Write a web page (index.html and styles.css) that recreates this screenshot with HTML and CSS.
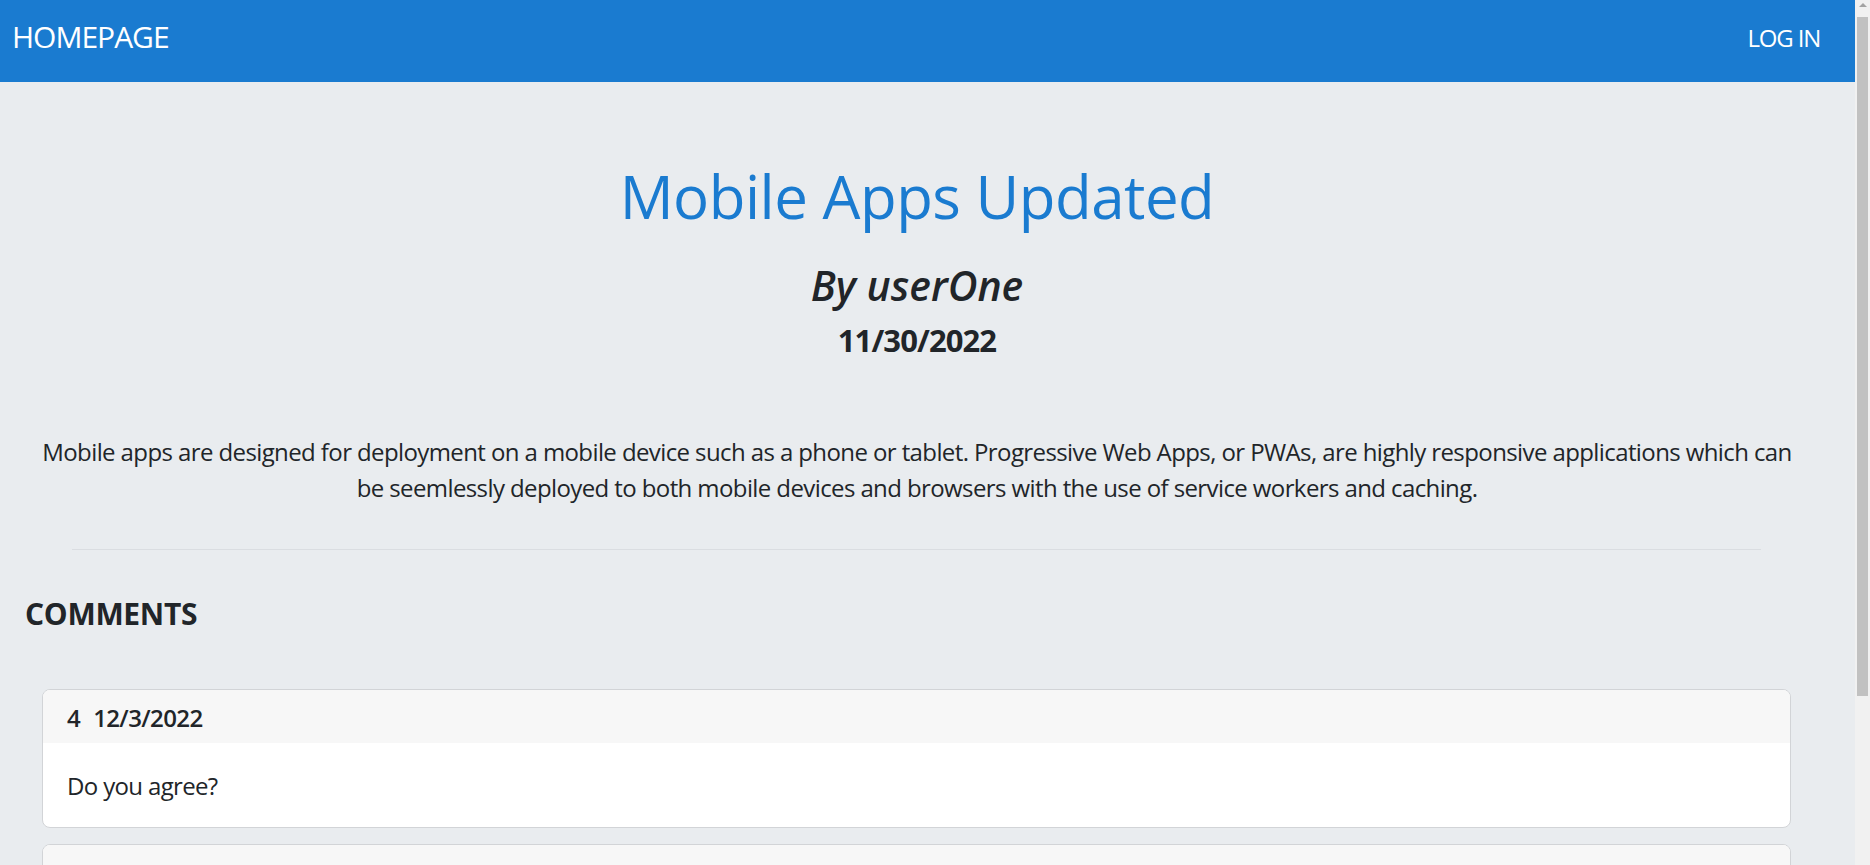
FILE: index.html
```html
<!DOCTYPE html>
<html lang="en">
<head>
<meta charset="utf-8">
<title>Mobile Apps Updated</title>
<link rel="stylesheet" href="styles.css">
</head>
<body>
<div class="frame">
  <div class="page">
    <header class="navbar">
      <a class="brand">HOMEPAGE</a>
      <a class="login">LOG IN</a>
    </header>
    <main class="content">
      <section class="post">
        <h1 class="post-title">Mobile Apps Updated</h1>
        <h2 class="post-author">By userOne</h2>
        <h3 class="post-date">11/30/2022</h3>
      </section>
      <p class="post-body">Mobile apps are designed for deployment on a mobile device such as a phone or tablet. Progressive Web Apps, or PWAs, are highly responsive applications which can be seemlessly deployed to both mobile devices and browsers with the use of service workers and caching.</p>
      <hr class="divider">
      <h2 class="comments-title">COMMENTS</h2>
      <div class="comments">
        <div class="card">
          <div class="card-header"><span class="c-user">4</span><span>12/3/2022</span></div>
          <div class="card-body">Do you agree?</div>
        </div>
        <div class="card">
          <div class="card-header"><span class="c-user">1</span><span>12/3/2022</span></div>
          <div class="card-body">Great post!</div>
        </div>
      </div>
    </main>
  </div>
  <div class="scrollbar">
    <div class="sb-arrow"></div>
    <div class="sb-thumb"></div>
  </div>
</div>
</body>
</html>
```
FILE: styles.css
```css
* { box-sizing: border-box; }
html, body {
  margin: 0;
  padding: 0;
  height: 100%;
  overflow: hidden;
}
body {
  font-family: "Segoe UI", "Open Sans", "Noto Sans", sans-serif;
  color: #212529;
  background: #e9ecef;
}
.frame {
  display: flex;
  height: 865px;
}
.page {
  flex: 1;
  min-width: 0;
  overflow: hidden;
  background: #e9ecef;
}
.navbar {
  height: 82px;
  background: #1a7bd0;
  display: flex;
  align-items: flex-start;
  justify-content: space-between;
  padding: 17px 35px 0 12px;
  color: #fff;
}
.brand {
  font-size: 30px;
  line-height: 40px;
  font-weight: 400;
  letter-spacing: -1px;
}
.login {
  font-size: 24px;
  line-height: 40px;
  letter-spacing: -1.2px;
  margin-top: 1px;
}
.content {
  display: flex;
  flex-direction: column;
}
.post {
  display: flex;
  flex-direction: column;
  align-items: center;
  padding-right: 21px;
}
.post-title {
  margin: 78px 0 0;
  font-size: 60px;
  line-height: 72px;
  font-weight: 400;
  color: #1a7bd0;
  letter-spacing: -0.5px;
}
.post-author {
  margin: 29px 0 0;
  font-size: 41px;
  line-height: 48px;
  font-weight: 600;
  font-style: italic;
}
.post-date {
  margin: 11px 0 0;
  font-size: 31px;
  line-height: 40px;
  font-weight: 700;
  letter-spacing: -0.9px;
}
.post-body {
  margin: 74px 52px 0 31px;
  font-size: 24px;
  line-height: 36px;
  text-align: center;
  letter-spacing: -0.6px;
}
.divider {
  margin: 43px 94px 0 72px;
  border: 0;
  border-top: 1px solid #dadde1;
  height: 0;
}
.comments-title {
  margin: 46px 0 0 25px;
  font-size: 30px;
  line-height: 36px;
  font-weight: 700;
  letter-spacing: -0.3px;
}
.comments {
  display: flex;
  flex-direction: column;
  gap: 16px;
  margin: 57px 64px 0 42px;
}
.card {
  background: #fff;
  border: 1px solid #d2d4d7;
  border-radius: 8px;
  overflow: hidden;
}
.card-header {
  background: #f7f7f7;
  height: 53px;
  padding: 10px 24px 0;
  font-size: 24px;
  line-height: 36px;
  font-weight: 600;
  letter-spacing: -0.6px;
}
.c-user { margin-right: 13px; }
.card-body {
  padding: 25px 24px 23px;
  font-size: 24px;
  line-height: 36px;
  letter-spacing: -0.65px;
}
.scrollbar {
  width: 15px;
  flex: none;
  background: #f1f1f1;
  display: flex;
  flex-direction: column;
  align-items: center;
}
.sb-arrow {
  margin-top: 3px;
  width: 0;
  height: 0;
  border-left: 4px solid transparent;
  border-right: 4px solid transparent;
  border-bottom: 4px solid #a3a3a3;
}
.sb-thumb {
  margin-top: 10px;
  width: 11px;
  height: 679px;
  background: #c1c1c1;
}
```
